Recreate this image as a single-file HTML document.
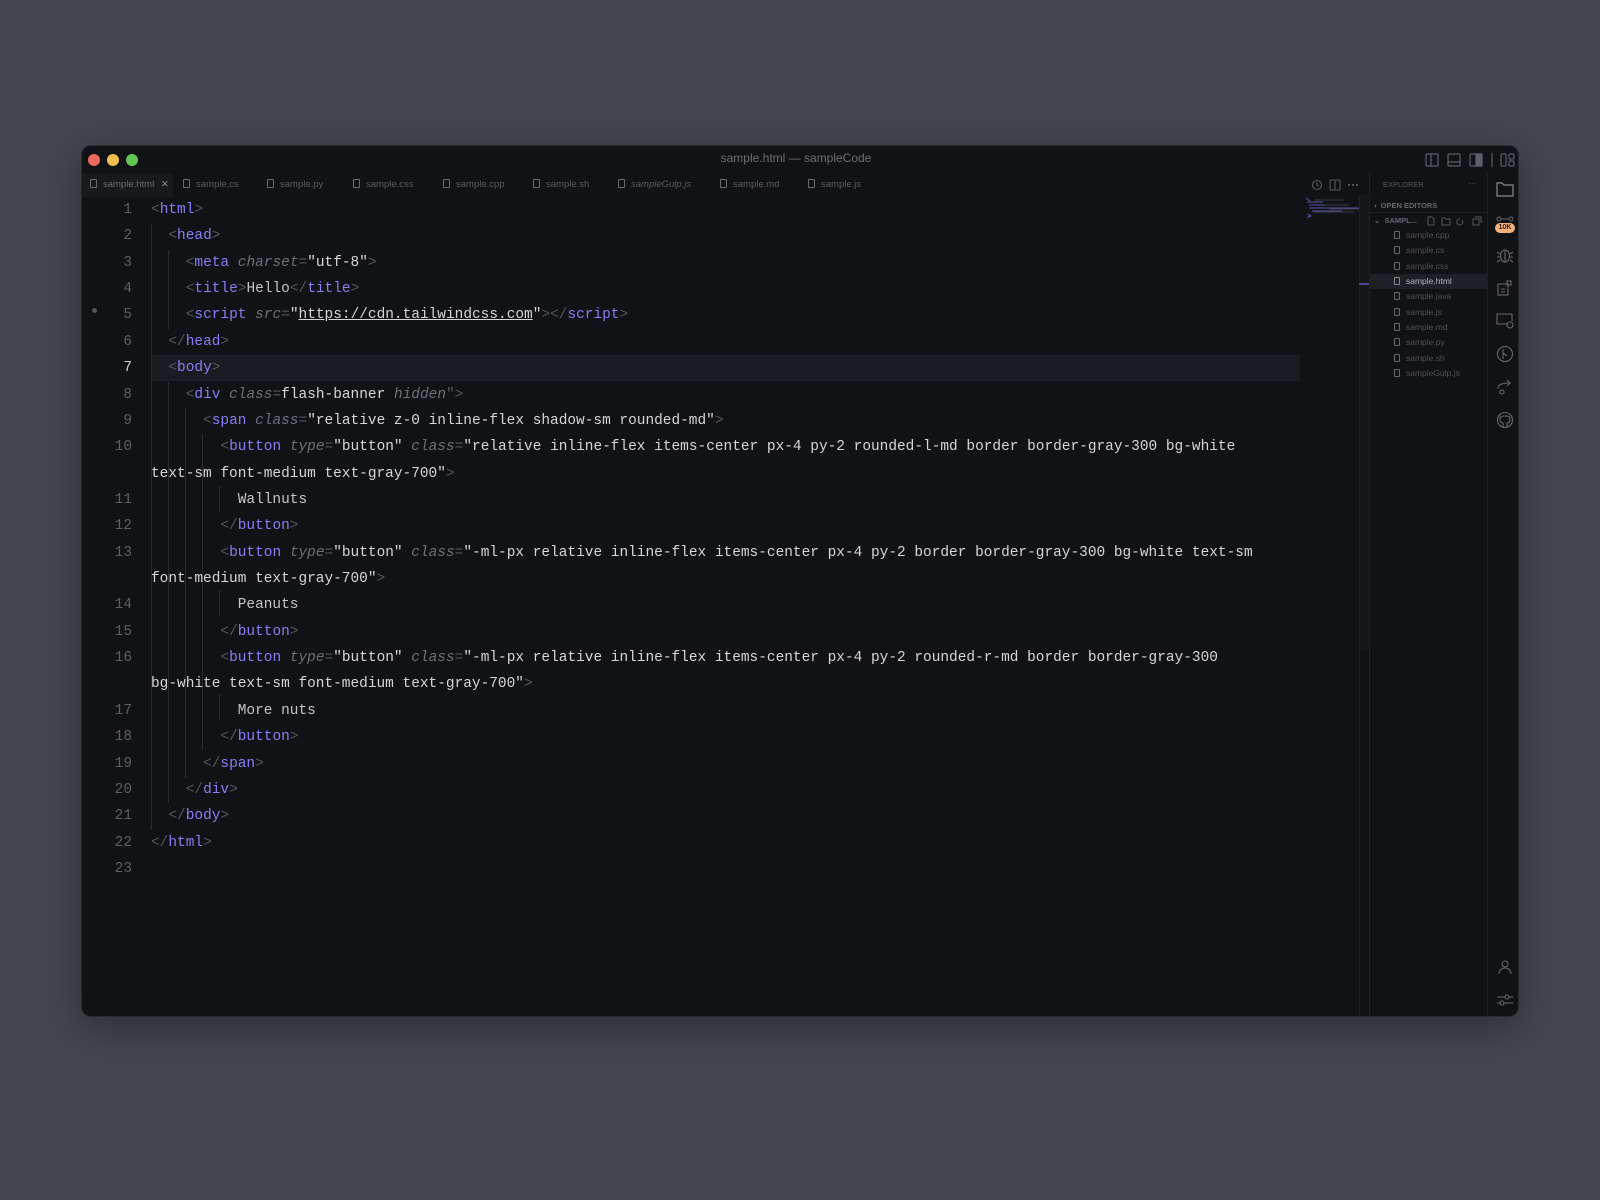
<!DOCTYPE html>
<html><head><meta charset="utf-8"><style>
*{margin:0;padding:0;box-sizing:border-box}
body{width:1600px;height:1200px;background:#45454f;overflow:hidden;position:relative;font-family:"Liberation Sans",sans-serif}
.win{position:absolute;left:81px;top:145px;width:1438px;height:872px;background:#111216;border-radius:10px;overflow:hidden;box-shadow:0 10px 40px rgba(0,0,0,.35);border:1px solid #2a2b31}
.abs{position:absolute}
.dot{position:absolute;top:8px;width:12px;height:12px;border-radius:50%}
.title{position:absolute;top:5px;width:1438px;text-align:center;font-size:12px;color:#6e6e76}
.tab{position:absolute;top:27px;height:24px;font-size:9.5px;color:#5a5a62;line-height:24px;white-space:nowrap}
.fi{display:inline-block;width:7px;height:9px;border:1px solid #6a6a72;border-radius:1px;vertical-align:-1px;margin-right:6px;position:relative}
.code{position:absolute;left:69px;top:51px;font-family:"Liberation Mono",monospace;font-size:14.46px;line-height:26.36px;color:#c4c4c9;white-space:pre}
.ln{position:absolute;left:0;width:50px;text-align:right;color:#5d5d66;font-family:"Liberation Mono",monospace;font-size:14.46px;line-height:26.36px;white-space:pre}
.t{color:#8b7cf6}.b{color:#55555e}.a{color:#6f6f78;font-style:italic}.s{color:#d6d6da}
.g{position:absolute;width:1px;background:#2a2b31}
.side{position:absolute;left:1287px;top:27px;width:118px;height:845px;border-left:1px solid #1e1f24}
.si{position:absolute;font-size:8.5px;color:#4f4f57;left:0;width:118px;height:15px;line-height:15px;white-space:nowrap}
.act{position:absolute;left:1405px;top:27px;width:33px;height:845px;border-left:1px solid #1e1f24}
svg{position:absolute}
</style></head><body>
<div class="win">
<div class="dot" style="left:6px;background:#ed6a5e"></div>
<div class="dot" style="left:25px;background:#f5bf4f"></div>
<div class="dot" style="left:44px;background:#61c554"></div>
<div class="title" style="left:-5px">sample.html — sampleCode</div>
<svg style="left:1343px;top:7px" width="90" height="14" fill="none" stroke="#5d5d66" stroke-width="1.2">
<rect x="1" y="1" width="12" height="12" rx="1"/><line x1="6" y1="1" x2="6" y2="13"/>
<rect x="23" y="1" width="12" height="12" rx="1"/><line x1="23" y1="9" x2="35" y2="9"/>
<rect x="45" y="1" width="12" height="12" rx="1"/><rect x="51" y="1" width="6" height="12" fill="#5d5d66"/>
<line x1="67" y1="0" x2="67" y2="14"/>
<rect x="76" y="1" width="5" height="12" rx="1"/><rect x="84" y="1" width="5" height="5" rx="1"/><rect x="84" y="8" width="5" height="5" rx="1"/>
</svg>
<div class="abs" style="left:0;top:27px;width:91px;height:24px;background:#18191d"></div>
<div class="tab" style="left:8px;color:#6c6c74"><span class="fi"></span>sample.html <span style="margin-left:4px;color:#888">✕</span></div>
<div class="tab" style="left:101px"><span class="fi"></span>sample.cs</div>
<div class="tab" style="left:185px"><span class="fi"></span>sample.py</div>
<div class="tab" style="left:271px"><span class="fi"></span>sample.css</div>
<div class="tab" style="left:361px"><span class="fi"></span>sample.cpp</div>
<div class="tab" style="left:451px"><span class="fi"></span>sample.sh</div>
<div class="tab" style="left:536px;font-style:italic"><span class="fi"></span>sampleGulp.js</div>
<div class="tab" style="left:638px"><span class="fi"></span>sample.md</div>
<div class="tab" style="left:726px"><span class="fi"></span>sample.js</div>
<svg style="left:1229px;top:33px" width="50" height="12" fill="none" stroke="#55555e" stroke-width="1.1">
<circle cx="6" cy="6" r="4.5"/><path d="M6 3v3l2 1"/>
<rect x="19" y="1" width="10" height="10" rx="1"/><line x1="24" y1="1" x2="24" y2="11"/>
<circle cx="38" cy="6" r=".6" fill="#55555e"/><circle cx="42" cy="6" r=".6" fill="#55555e"/><circle cx="46" cy="6" r=".6" fill="#55555e"/>
</svg>
<div class="abs" style="left:69px;top:209px;width:1149px;height:26px;background:#1a1b20"></div>
<div class="g" style="left:69px;top:78px;height:606px"></div>
<div class="g" style="left:86px;top:104px;height:79px"></div>
<div class="g" style="left:86px;top:236px;height:421px"></div>
<div class="g" style="left:103px;top:262px;height:370px"></div>
<div class="g" style="left:120px;top:288px;height:316px"></div>
<div class="g" style="left:137px;top:340px;height:26px"></div>
<div class="g" style="left:137px;top:444px;height:26px"></div>
<div class="g" style="left:137px;top:548px;height:26px"></div>
<div class="abs" style="left:10px;top:162px;width:5px;height:5px;border-radius:50%;background:#55555e"></div>
<div class="ln" style="left:0;top:51px">1
2
3
4
5
6
<span style="color:#cfcfd4">7</span>
8
9
10

11
12
13

14
15
16

17
18
19
20
21
22
23</div>
<div class="code"><span class="b">&lt;</span><span class="t">html</span><span class="b">&gt;</span>
  <span class="b">&lt;</span><span class="t">head</span><span class="b">&gt;</span>
    <span class="b">&lt;</span><span class="t">meta</span> <span class="a">charset</span><span class="b">=</span><span class="s">"utf-8"</span><span class="b">&gt;</span>
    <span class="b">&lt;</span><span class="t">title</span><span class="b">&gt;</span>Hello<span class="b">&lt;/</span><span class="t">title</span><span class="b">&gt;</span>
    <span class="b">&lt;</span><span class="t">script</span> <span class="a">src</span><span class="b">=</span><span class="s">"<u>https://cdn.tailwindcss.com</u>"</span><span class="b">&gt;&lt;/</span><span class="t">script</span><span class="b">&gt;</span>
  <span class="b">&lt;/</span><span class="t">head</span><span class="b">&gt;</span>
  <span class="b">&lt;</span><span class="t">body</span><span class="b">&gt;</span>
    <span class="b">&lt;</span><span class="t">div</span> <span class="a">class</span><span class="b">=</span><span class="s">flash-banner</span> <span class="a">hidden</span><span class="b">"&gt;</span>
      <span class="b">&lt;</span><span class="t">span</span> <span class="a">class</span><span class="b">=</span><span class="s">"relative z-0 inline-flex shadow-sm rounded-md"</span><span class="b">&gt;</span>
        <span class="b">&lt;</span><span class="t">button</span> <span class="a">type</span><span class="b">=</span><span class="s">"button"</span> <span class="a">class</span><span class="b">=</span><span class="s">"relative inline-flex items-center px-4 py-2 rounded-l-md border border-gray-300 bg-white</span>
<span class="s">text-sm font-medium text-gray-700"</span><span class="b">&gt;</span>
          Wallnuts
        <span class="b">&lt;/</span><span class="t">button</span><span class="b">&gt;</span>
        <span class="b">&lt;</span><span class="t">button</span> <span class="a">type</span><span class="b">=</span><span class="s">"button"</span> <span class="a">class</span><span class="b">=</span><span class="s">"-ml-px relative inline-flex items-center px-4 py-2 border border-gray-300 bg-white text-sm</span>
<span class="s">font-medium text-gray-700"</span><span class="b">&gt;</span>
          Peanuts
        <span class="b">&lt;/</span><span class="t">button</span><span class="b">&gt;</span>
        <span class="b">&lt;</span><span class="t">button</span> <span class="a">type</span><span class="b">=</span><span class="s">"button"</span> <span class="a">class</span><span class="b">=</span><span class="s">"-ml-px relative inline-flex items-center px-4 py-2 rounded-r-md border border-gray-300</span>
<span class="s">bg-white text-sm font-medium text-gray-700"</span><span class="b">&gt;</span>
          More nuts
        <span class="b">&lt;/</span><span class="t">button</span><span class="b">&gt;</span>
      <span class="b">&lt;/</span><span class="t">span</span><span class="b">&gt;</span>
    <span class="b">&lt;/</span><span class="t">div</span><span class="b">&gt;</span>
  <span class="b">&lt;/</span><span class="t">body</span><span class="b">&gt;</span>
<span class="b">&lt;/</span><span class="t">html</span><span class="b">&gt;</span>
</div>
<svg style="left:1222px;top:50px" width="60" height="26" stroke-width="1">
<path d="M2 2l4 3M3 6h16M5 9h26M5 12h55M8 15h30M4 18l3 3M3 22l4-3" stroke="#5b53a6"/>
<path d="M10 4h30M20 9h25M25 13h30M10 16h40" stroke="#3b3b44"/>
</svg>
<div class="abs" style="left:1277px;top:49px;width:10px;height:456px;background:#16171b;border-left:1px solid #202126"></div>
<div class="abs" style="left:1277px;top:49px;width:1px;height:823px;background:#202126"></div>
<div class="abs" style="left:1277px;top:137px;width:10px;height:2px;background:#4a4590"></div>
<div class="side">
<div class="si" style="left:13px;top:4px;font-size:7.5px;color:#55555e">EXPLORER</div>
<div class="si" style="left:98px;top:3px;color:#55555e">···</div>
<div class="si" style="left:4px;top:25px;font-size:7.5px;font-weight:bold;color:#66666e">›&nbsp; OPEN EDITORS</div>
<div class="abs" style="left:0;top:39px;width:118px;height:1px;background:#1e1f24"></div>
<div class="si" style="left:4px;top:40px;font-size:7.5px;font-weight:bold;color:#66666e">⌄&nbsp; SAMPL...</div>
<svg style="left:57px;top:43px" width="56" height="10" fill="none" stroke="#55555e" stroke-width="1"><path d="M1 1h4l2 2v6H1z"/><path d="M15 2h3l1 1h4v6h-8z"/><path d="M33 3a3 3 0 1 0 2 1"/><rect x="46" y="3" width="6" height="6"/><path d="M48 1h6v6"/></svg>
<div class="abs" style="left:0;top:101px;width:118px;height:15px;background:#1f2026"></div>
<div class="si" style="left:24px;top:55px"><span class="fi" style="width:6px;height:8px;border-color:#66666e"></span>sample.cpp</div>
<div class="si" style="left:24px;top:70px"><span class="fi" style="width:6px;height:8px;border-color:#66666e"></span>sample.cs</div>
<div class="si" style="left:24px;top:86px"><span class="fi" style="width:6px;height:8px;border-color:#66666e"></span>sample.css</div>
<div class="si" style="left:24px;top:101px;color:#b4b4bc"><span class="fi" style="width:6px;height:8px;border-color:#888"></span>sample.html</div>
<div class="si" style="left:24px;top:116px"><span class="fi" style="width:6px;height:8px;border-color:#66666e"></span>sample.java</div>
<div class="si" style="left:24px;top:132px"><span class="fi" style="width:6px;height:8px;border-color:#66666e"></span>sample.js</div>
<div class="si" style="left:24px;top:147px"><span class="fi" style="width:6px;height:8px;border-color:#66666e"></span>sample.md</div>
<div class="si" style="left:24px;top:162px"><span class="fi" style="width:6px;height:8px;border-color:#66666e"></span>sample.py</div>
<div class="si" style="left:24px;top:178px"><span class="fi" style="width:6px;height:8px;border-color:#66666e"></span>sample.sh</div>
<div class="si" style="left:24px;top:193px"><span class="fi" style="width:6px;height:8px;border-color:#66666e"></span>sampleGulp.js</div>
</div>
<div class="act">
<div class="abs" style="left:30px;top:0;width:2px;height:34px;background:#55555e"></div>
<svg style="left:8px;top:8px" width="18" height="16" fill="none" stroke="#8a8a92" stroke-width="1.2"><path d="M1 2h5l2 2h9v11H1z"/></svg>
<svg style="left:8px;top:42px" width="18" height="8" fill="none" stroke="#66666e" stroke-width="1"><circle cx="3" cy="4" r="2"/><circle cx="15" cy="4" r="2"/><line x1="5" y1="4" x2="13" y2="4"/></svg>
<div class="abs" style="left:7px;top:50px;width:20px;height:10px;border-radius:5px;background:#f3b07a;color:#2a1a10;font-size:7px;font-weight:bold;text-align:center;line-height:10px">10K</div>
<svg style="left:8px;top:73px" width="18" height="18" fill="none" stroke="#66666e" stroke-width="1.1"><ellipse cx="9" cy="10" rx="4.5" ry="6"/><path d="M1 6l3 2M17 6l-3 2M1 11h3M14 11h3M1 16l3-2M17 16l-3-2M9 4v12"/></svg>
<svg style="left:9px;top:107px" width="16" height="16" fill="none" stroke="#66666e" stroke-width="1.1"><rect x="1" y="4" width="10" height="11"/><rect x="10" y="1" width="4" height="4"/><path d="M4 9h4M4 12h4"/></svg>
<svg style="left:8px;top:140px" width="18" height="16" fill="none" stroke="#66666e" stroke-width="1.1"><path d="M12 11H1V1h15v7"/><circle cx="14" cy="12" r="3"/></svg>
<svg style="left:8px;top:172px" width="18" height="18" fill="none" stroke="#66666e" stroke-width="1.1"><circle cx="9" cy="9" r="7.5"/><path d="M7 4v10M7 8l4 3"/></svg>
<svg style="left:8px;top:206px" width="18" height="16" fill="none" stroke="#66666e" stroke-width="1.1"><path d="M2 10c0-5 5-6 12-6l-3-3M14 4l-3 3"/><circle cx="6" cy="13" r="2"/></svg>
<svg style="left:8px;top:238px" width="18" height="18" fill="none" stroke="#66666e" stroke-width="1.1"><circle cx="9" cy="9" r="7.5"/><path d="M7 16v-4c-2 0-3-1-3-4s2-3 5-3 5 0 5 3-1 4-3 4v4"/></svg>
<svg style="left:9px;top:786px" width="16" height="16" fill="none" stroke="#66666e" stroke-width="1.1"><circle cx="8" cy="5" r="3"/><path d="M2 15c0-4 3-6 6-6s6 2 6 6"/></svg>
<svg style="left:8px;top:820px" width="18" height="14" fill="none" stroke="#66666e" stroke-width="1.1"><path d="M1 4h16M1 10h16"/><circle cx="11" cy="4" r="2" fill="#111216"/><circle cx="6" cy="10" r="2" fill="#111216"/></svg>
</div>
</div>
</body></html>
